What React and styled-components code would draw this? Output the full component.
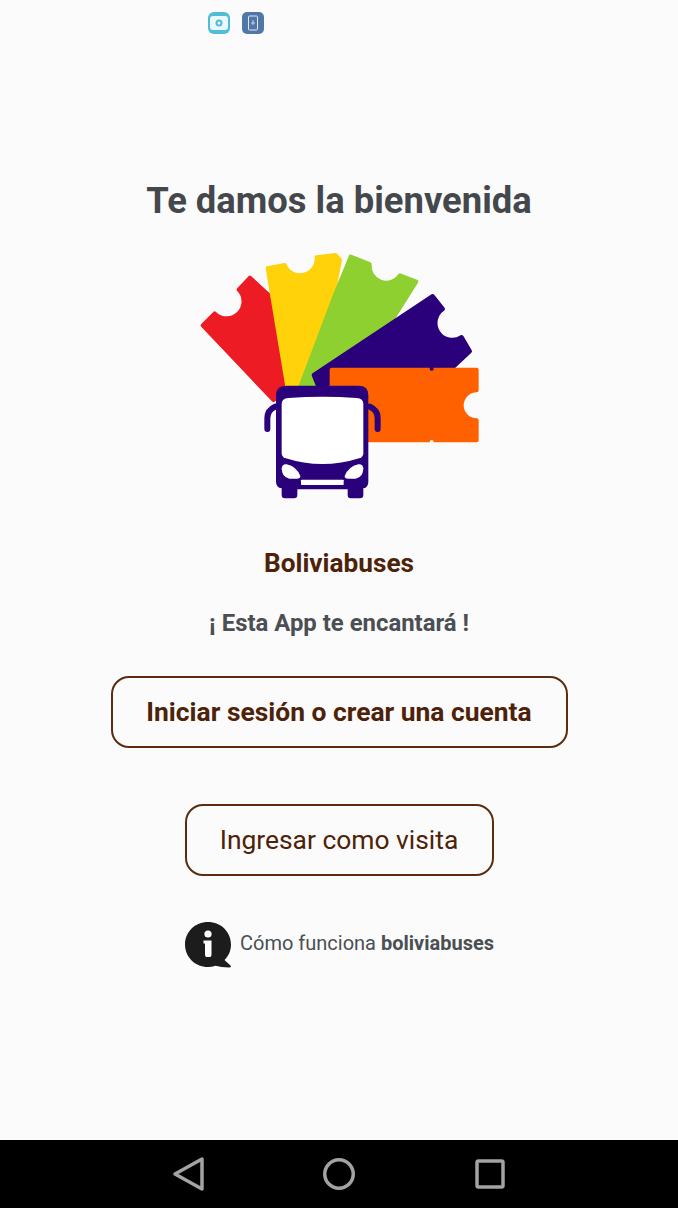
import styled, { createGlobalStyle } from "styled-components";

const GlobalStyle = createGlobalStyle`
  html, body {
    margin: 0;
    padding: 0;
    background: #fbfbfb;
    font-family: Roboto, "Liberation Sans", sans-serif;
  }
`;

const Logo = () => (
  <LogoSvg viewBox="0 0 900 810">
    <g strokeWidth="12" strokeLinejoin="round">
      <path
        fill="#ed1c24"
        stroke="#ed1c24"
        d="M38 256 L74 220 A48 48 0 0 0 146 149 L180 113 L236 165 L292 450 L250 480 Z"
      />
      <path
        fill="#ffd20a"
        stroke="#ffd20a"
        d="M233 85 L284 75 A50 50 0 0 0 380 52 L437 45 L450 60 L428 175 L322 440 L292 440 Z"
      />
      <path
        fill="#8ed02f"
        stroke="#8ed02f"
        d="M482 50 L539 72 A50 50 0 0 0 630 106 L679 125 L600 250 L400 430 L332 438 L432 172 Z"
      />
      <path
        fill="#2a007b"
        stroke="#2a007b"
        d="M371 405 L728 168 L759 207 A50 50 0 0 0 815 291 L840 334 L780 390 L420 440 L385 440 Z"
      />
      <path
        fill="#ff6000"
        stroke="#ff6000"
        d="M425 389 L860 389 L860 451 A45 45 0 0 0 860 541 L860 601 L425 601 Z"
      />
    </g>
    <circle cx="725" cy="386" r="6" fill="#2a007b" />
    <circle cx="725" cy="606" r="6" fill="#fbfbfb" />
    <path
      fill="none"
      stroke="#2a007b"
      strokeWidth="18"
      strokeLinecap="round"
      d="M255 500 Q232 510 232 535 L232 567 M540 500 Q563 510 563 535 L563 567"
    />
    <path
      fill="#2a007b"
      d="M275 765 L275 745 Q258 742 258 725 L258 465 Q258 437 290 437 L505 437 Q535 437 535 465 L535 725 Q535 742 520 745 L520 765 Q520 775 510 775 L482 775 Q473 775 473 765 L473 748 L322 748 L322 765 Q322 775 312 775 L285 775 Q275 775 275 765 Z"
    />
    <path
      fill="#fff"
      d="M275 492 Q275 476 295 474 Q397 466 500 474 Q520 476 520 492 L520 640 Q520 650 510 654 Q397 690 285 654 Q275 650 275 640 Z"
    />
    <path fill="#fff" d="M275 685 Q277 671 290 673 Q320 680 331 708 Q332 716 320 716 L298 716 Q275 712 275 685 Z" />
    <path fill="#fff" d="M520 685 Q518 671 505 673 Q475 680 464 708 Q463 716 475 716 L497 716 Q520 712 520 685 Z" />
    <rect x="333" y="719" width="128" height="16" rx="2" fill="#fff" />
  </LogoSvg>
);

const InfoIcon = () => (
  <InfoSvg viewBox="0 0 46 46">
    <path
      fill="#1c1c1c"
      d="M23 0 C36 0 46 10 46 22.500 C46 29 43.500 34 39.500 38 L46 44 Q46 45.500 44 45.500 Q36 45.500 30.500 43.700 Q27 45 23 45 C10 45 0 35 0 22.500 C0 10 10 0 23 0 Z"
    />
    <circle cx="23" cy="12" r="3.600" fill="#fff" />
    <path fill="#fff" d="M18.500 18.500 L26.500 18.500 L26.500 32 Q26.500 35 25 35 L21 35 Q20 35 20 32 L20 21.500 L18.500 21.500 Z" />
  </InfoSvg>
);

const App = () => {
  return (
    <Screen>
      <GlobalStyle />
      <StatusBar>
        <CameraBadge viewBox="0 0 22 22">
          <rect width="22" height="22" rx="6" fill="#4fbdd6" />
          <rect x="2" y="4" width="18" height="14" rx="3" fill="#eaf8fb" />
          <circle cx="11" cy="11" r="3.500" fill="#4fbdd6" />
          <circle cx="11" cy="11" r="1.500" fill="#eaf8fb" />
        </CameraBadge>
        <PhoneBadge viewBox="0 0 22 22">
          <rect width="22" height="22" rx="5" fill="#5176a8" />
          <rect x="6.500" y="4" width="9" height="14" rx="1" fill="none" stroke="#dfe8f3" />
          <path d="M11 8 L11 13 M9 11 L13 11" stroke="#dfe8f3" strokeWidth="0.800" />
        </PhoneBadge>
      </StatusBar>
      <Main>
        <Title>Te damos la bienvenida</Title>
        <Logo />
        <Brand>Boliviabuses</Brand>
        <Tagline>¡ Esta App te encantará !</Tagline>
        <OutlineButton $wide>Iniciar sesión o crear una cuenta</OutlineButton>
        <OutlineButton>Ingresar como visita</OutlineButton>
        <HowItWorks>
          <InfoIcon />
          <HowText>
            Cómo funciona <strong>boliviabuses</strong>
          </HowText>
        </HowItWorks>
      </Main>
      <NavBar>
        <NavIcon viewBox="0 0 34 36">
          <path d="M31 3 L31 33 L4 18 Z" />
        </NavIcon>
        <NavIcon viewBox="0 0 34 36">
          <circle cx="17" cy="18" r="14.250" />
        </NavIcon>
        <NavIcon viewBox="0 0 34 36">
          <rect x="4" y="5" width="26" height="26" rx="1.500" />
        </NavIcon>
      </NavBar>
    </Screen>
  );
};

const Screen = styled.div`
  width: 678px;
  height: 1208px;
  display: flex;
  flex-direction: column;
  overflow: hidden;
  background: #fbfbfb;
`;

const StatusBar = styled.div`
  height: 46px;
  box-sizing: border-box;
  padding: 12px 0 0 208px;
  display: flex;
  align-items: flex-start;
  gap: 12px;
`;

const CameraBadge = styled.svg`
  width: 22px;
  height: 22px;
  filter: blur(0.6px);
`;

const PhoneBadge = styled(CameraBadge)``;

const Main = styled.main`
  flex: 1;
  display: flex;
  flex-direction: column;
  align-items: center;
  padding-top: 134px;
`;

const Title = styled.h1`
  margin: 0;
  font-size: 36.400px;
  line-height: 42px;
  font-weight: 700;
  color: #44484c;
`;

const LogoSvg = styled.svg`
  display: block;
  width: 300px;
  height: 270px;
  margin: 18px 0 0 2px;
`;

const Brand = styled.div`
  margin-top: 37px;
  font-size: 26.200px;
  line-height: 32px;
  font-weight: 700;
  color: #4d2208;
`;

const Tagline = styled.div`
  margin-top: 29px;
  font-size: 23.900px;
  line-height: 30px;
  font-weight: 700;
  color: #4b4f53;
`;

const OutlineButton = styled.button`
  box-sizing: border-box;
  height: 72px;
  width: ${(p) => (p.$wide ? "457px" : "309px")};
  margin-top: ${(p) => (p.$wide ? "38px" : "56px")};
  padding: 0;
  border: 2px solid #5a2c10;
  border-radius: 18px;
  background: transparent;
  font-family: inherit;
  font-size: 26.400px;
  font-weight: ${(p) => (p.$wide ? 700 : 400)};
  color: #4d2208;
`;

const HowItWorks = styled.div`
  margin-top: 46px;
  padding-left: 1px;
  display: flex;
  align-items: center;
  gap: 9px;
`;

const InfoSvg = styled.svg`
  width: 46px;
  height: 46px;
`;

const HowText = styled.div`
  font-size: 20px;
  color: #4a4f54;
  margin-top: -4px;

  strong {
    font-weight: 700;
  }
`;

const NavBar = styled.nav`
  height: 68px;
  flex-shrink: 0;
  box-sizing: border-box;
  padding-left: 171px;
  background: #000;
  display: flex;
  align-items: center;
  gap: 117px;
`;

const NavIcon = styled.svg`
  width: 34px;
  height: 36px;
  fill: none;
  stroke: #a3a3a3;
  stroke-width: 3.500;
  stroke-linejoin: round;
`;

export default App;
